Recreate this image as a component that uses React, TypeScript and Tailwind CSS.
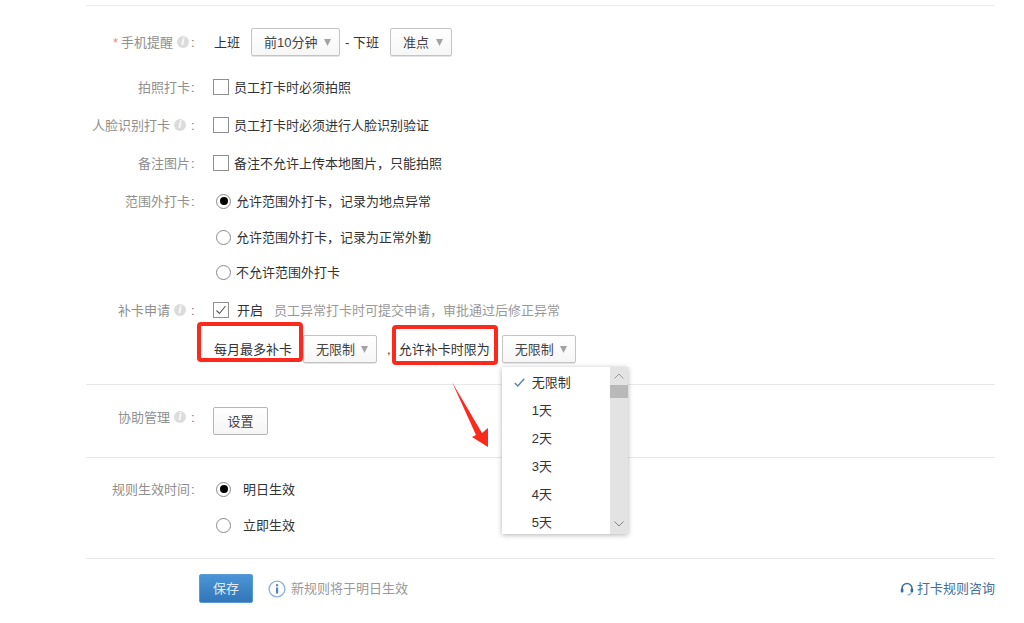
import { ReactNode } from "react";

function InfoDot({ tight }: { tight?: boolean }) {
  return (
    <span
      className={`ml-[4px] flex h-[12px] w-[12px] items-center justify-center rounded-full bg-[#dcdcdc] text-[10px] font-bold italic leading-none text-white ${tight ? "mr-[1px]" : "mr-[4px]"}`}
    >
      i
    </span>
  );
}

function Label({ text, required, info, className }: { text: string; required?: boolean; info?: boolean; className?: string }) {
  return (
    <div className={`flex w-[110px] shrink-0 items-center justify-end text-[#909090] ${className ?? ""}`}>
      {required && <span className="mr-[3px] text-[#f08a7d]">*</span>}
      <span className="whitespace-nowrap">{text}</span>
      {info && <InfoDot tight={required} />}
      <span className="ml-[1px] w-[5px] text-left text-[#777]">:</span>
    </div>
  );
}

function Caret() {
  return (
    <svg width="7" height="8" viewBox="0 0 7 8" className="shrink-0">
      <polygon points="0,1 7,1 3.5,8" fill="#a3a3a3" />
    </svg>
  );
}

function Select({ text, className, children }: { text: string; className: string; children?: ReactNode }) {
  return (
    <div
      className={`relative flex h-[28px] shrink-0 items-center justify-between rounded-[2px] border border-[#c4c4c4] bg-gradient-to-b from-white to-[#f6f6f6] pl-[12px] pr-[8px] text-[#444] shadow-[0_1px_0_#e4e4e4] ${className}`}
    >
      <span className="whitespace-nowrap">{text}</span>
      <Caret />
      {children}
    </div>
  );
}

function Checkbox({ checked }: { checked?: boolean }) {
  return (
    <span className="flex h-[16px] w-[16px] shrink-0 items-center justify-center border border-[#8f8f8f] bg-white">
      {checked && (
        <svg width="12" height="12" viewBox="0 0 12 12" fill="none">
          <path d="M1.5 6.5 L4.5 9.5 L10.5 2" stroke="#555" strokeWidth="1.1" />
        </svg>
      )}
    </span>
  );
}

function Radio({ checked, className }: { checked?: boolean; className: string }) {
  return (
    <span
      className={`flex h-[15px] w-[15px] shrink-0 items-center justify-center rounded-full border border-[#8a8a8a] bg-white ${className}`}
    >
      {checked && <span className="h-[8px] w-[8px] rounded-full bg-black" />}
    </span>
  );
}

function Row({ h, label, children }: { h: string; label?: ReactNode; children: ReactNode }) {
  return (
    <div className={`flex items-center ${h}`}>
      {label ?? <div className="w-[110px] shrink-0" />}
      <div className="ml-[17px] flex items-center">{children}</div>
    </div>
  );
}

function Dropdown() {
  const items = ["无限制", "1天", "2天", "3天", "4天", "5天"];
  return (
    <div className="absolute left-[-1px] top-[31px] z-10 flex h-[167px] w-[126px] overflow-hidden bg-white shadow-[0_1px_5px_rgba(0,0,0,0.3)]">
      <div className="flex-1 overflow-hidden pt-[1px]">
        {items.map((item, i) => (
          <div key={item} className="flex h-[28px] items-center text-[#333]">
            <span className="flex w-[30px] shrink-0 justify-end pr-[7px]">
              {i === 0 && (
                <svg width="11" height="9" viewBox="0 0 11 9" fill="none">
                  <path d="M0.8 5 L3.8 8 L10.2 0.8" stroke="#5b82ad" strokeWidth="1.4" />
                </svg>
              )}
            </span>
            {item}
          </div>
        ))}
      </div>
      <div className="flex w-[18px] flex-col bg-[#e3e3e3]">
        <div className="flex h-[18px] items-center justify-center">
          <svg width="10" height="6" viewBox="0 0 10 6" fill="none">
            <path d="M0.5 5.5 L5 1 L9.5 5.5" stroke="#9a9a9a" />
          </svg>
        </div>
        <div className="h-[13px] bg-[#b9b9b9]" />
        <div className="flex flex-1 items-end justify-center pb-[7px]">
          <svg width="10" height="6" viewBox="0 0 10 6" fill="none">
            <path d="M0.5 0.5 L5 5 L9.5 0.5" stroke="#808080" />
          </svg>
        </div>
      </div>
    </div>
  );
}

function Highlight({ className }: { className: string }) {
  return <span className={`pointer-events-none absolute rounded-[4px] border-[4px] border-[#fb2a1c] ${className}`} />;
}

export default function App() {
  return (
    <div className="relative h-[623px] w-[1024px] overflow-hidden bg-white pl-[86px] pt-[5px] text-[13px] leading-none text-[#333] [font-family:'Liberation_Sans','Noto_Sans_CJK_SC',sans-serif]">
      <div className="w-[909px]">
        <div className="border-t border-[#ececec] pt-[21px]">
          <div className="mb-[11px]">
            <Row h="h-[30px]" label={<Label text="手机提醒" required info />}>
              <span className="ml-[1px] mr-[11px]">上班</span>
              <Select text="前10分钟" className="w-[89px]" />
              <span className="ml-[5px] mr-[11px]">- 下班</span>
              <Select text="准点" className="w-[62px]" />
            </Row>
          </div>
          <Row h="h-[38px]" label={<Label text="拍照打卡" />}>
            <Checkbox />
            <span className="ml-[5px]">员工打卡时必须拍照</span>
          </Row>
          <Row h="h-[38px]" label={<Label text="人脸识别打卡" info />}>
            <Checkbox />
            <span className="ml-[5px]">员工打卡时必须进行人脸识别验证</span>
          </Row>
          <Row h="h-[38px]" label={<Label text="备注图片" />}>
            <Checkbox />
            <span className="ml-[5px]">备注不允许上传本地图片，只能拍照</span>
          </Row>
          <Row h="h-[38px]" label={<Label text="范围外打卡" />}>
            <Radio checked className="ml-[3px]" />
            <span className="ml-[5px]">允许范围外打卡，记录为地点异常</span>
          </Row>
          <Row h="h-[35px]">
            <Radio className="ml-[3px]" />
            <span className="ml-[5px]">允许范围外打卡，记录为正常外勤</span>
          </Row>
          <Row h="h-[35px]">
            <Radio className="ml-[3px]" />
            <span className="ml-[5px]">不允许范围外打卡</span>
          </Row>
          <Row h="h-[40px]" label={<Label text="补卡申请" info />}>
            <Checkbox checked />
            <span className="ml-[8px]">开启</span>
            <span className="ml-[11px] text-[#999]">员工异常打卡时可提交申请，审批通过后修正异常</span>
          </Row>
          <Row h="h-[38px]">
            <span className="relative ml-[1px] mr-[11px] whitespace-nowrap">
              每月最多补卡
              <Highlight className="left-[-17px] top-[-21px] h-[40px] w-[106px]" />
            </span>
            <Select text="无限制" className="w-[74px]" />
            <span className="ml-[10px] mr-[8px]">,</span>
            <span className="relative mr-[12px] whitespace-nowrap">
              允许补卡时限为
              <Highlight className="left-[-7px] top-[-18px] h-[40px] w-[106px]" />
            </span>
            <Select text="无限制" className="w-[74px]">
              <Dropdown />
            </Select>
          </Row>
        </div>
        <div className="mt-[16px] h-[73px] border-t border-[#e8e8e8] pt-[22px]">
          <Row h="h-[28px]" label={<Label text="协助管理" info className="mb-[8px]" />}>
            <button className="h-[28px] w-[55px] rounded-[2px] border border-[#b5b5b5] bg-gradient-to-b from-white to-[#f5f5f5] text-[13px] text-[#444]">
              设置
            </button>
          </Row>
        </div>
        <div className="h-[101px] border-t border-[#e8e8e8] pt-[13px]">
          <Row h="h-[36px]" label={<Label text="规则生效时间" />}>
            <Radio checked className="ml-[3px]" />
            <span className="ml-[12px]">明日生效</span>
          </Row>
          <Row h="h-[36px]">
            <Radio className="ml-[3px]" />
            <span className="ml-[12px]">立即生效</span>
          </Row>
        </div>
        <div className="flex items-center justify-between border-t border-[#e8e8e8] pl-[113px] pt-[15px]">
          <div className="flex items-center">
            <button className="h-[29px] w-[54px] rounded-[2px] border border-[#5b9bd5] bg-gradient-to-b from-[#4b95d6] to-[#3176b8] text-[13px] text-[#dfeaf5]">
              保存
            </button>
            <svg width="18" height="18" viewBox="0 0 18 18" className="ml-[15px]">
              <circle cx="9" cy="9" r="7.9" fill="none" stroke="#8fb3d6" strokeWidth="1.4" />
              <rect x="8" y="7.5" width="2.2" height="6" fill="#4f86bb" />
              <rect x="8" y="4.2" width="2.2" height="2.1" fill="#4f86bb" />
            </svg>
            <span className="ml-[5px] text-[#999]">新规则将于明日生效</span>
          </div>
          <div className="flex items-center text-[#44709c]">
            <svg width="14" height="14" viewBox="0 0 14 14" fill="none" className="mr-[3px]">
              <path d="M2 8 V6.5 A5 5 0 0 1 12 6.5 V8" stroke="#44709c" strokeWidth="1.6" />
              <rect x="0.8" y="6.5" width="2.6" height="4" rx="1" fill="#2f6ea5" />
              <rect x="10.6" y="6.5" width="2.6" height="4" rx="1" fill="#2f6ea5" />
              <path d="M11.5 10.5 Q10.5 13 7.5 13" stroke="#8fb3d6" strokeWidth="1.2" />
            </svg>
            打卡规则咨询
          </div>
        </div>
      </div>
      <svg width="40" height="70" viewBox="0 0 40 70" className="absolute left-[450px] top-[380px]">
        <polygon points="2,2 32,53 38,48 38,67 22,57 26,55" fill="#fb2a1c" />
      </svg>
    </div>
  );
}
